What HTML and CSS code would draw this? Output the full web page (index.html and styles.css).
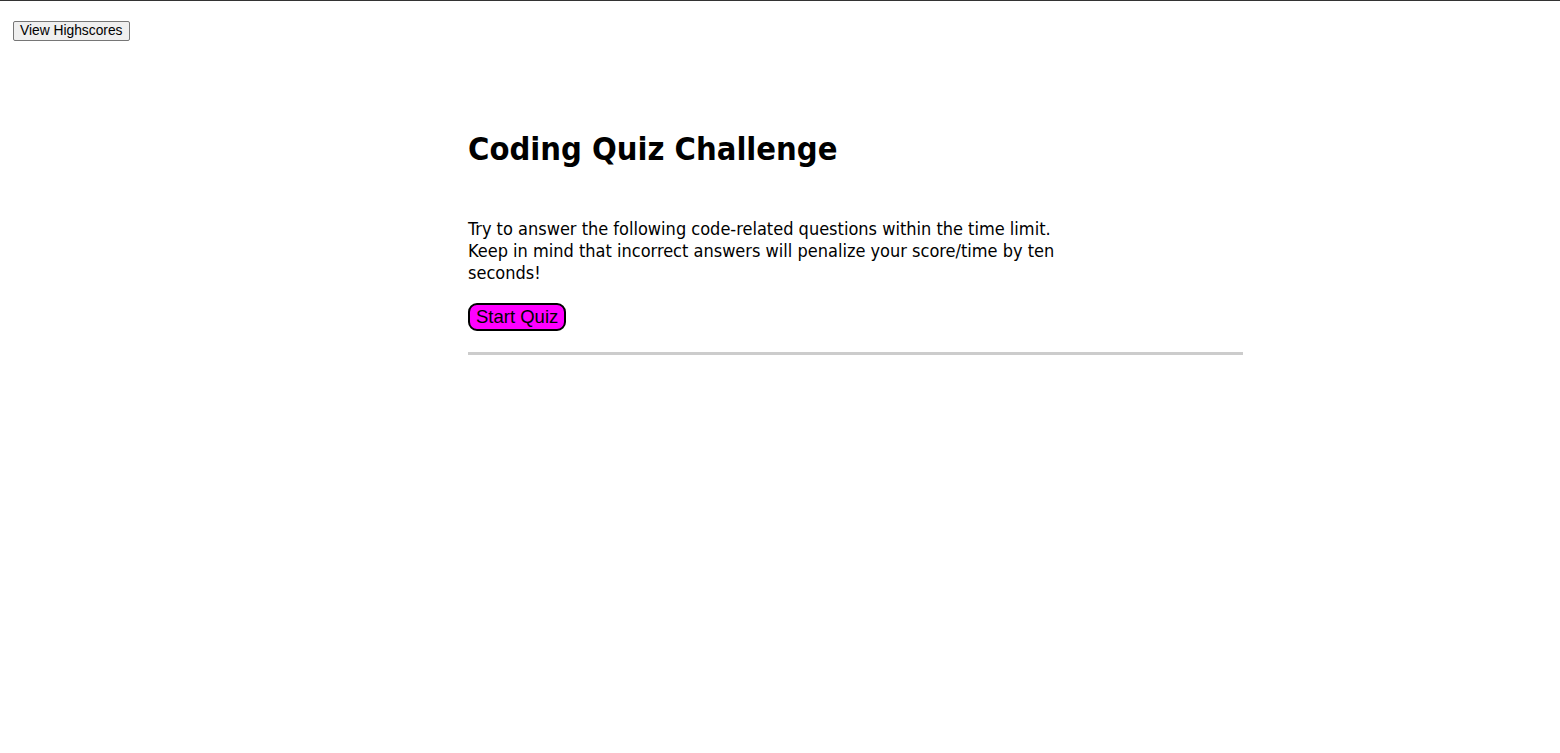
FILE: index.html
```html
<!DOCTYPE html>
<html lang="en">
<head>
<meta charset="utf-8">
<title>Coding Quiz Challenge</title>
<link rel="stylesheet" href="styles.css">
</head>
<body>
<header class="top">
  <button class="scores-btn" type="button">View Highscores</button>
</header>
<main class="quiz">
  <h1 class="title">Coding Quiz Challenge</h1>
  <p class="intro">Try to answer the following code-related questions within the time limit. Keep in mind that incorrect answers will penalize your score/time by ten seconds!</p>
  <button class="start-btn" type="button">Start Quiz</button>
  <hr class="divider">
</main>
</body>
</html>
```
FILE: styles.css
```css
html, body {
  margin: 0;
  padding: 0;
  background: #ffffff;
}
body {
  border-top: 1px solid #333333;
  font-family: "DejaVu Sans Condensed", "DejaVu Sans", sans-serif;
  font-stretch: condensed;
  color: #000;
}
.top {
  display: flex;
  padding: 20px 13px 0;
}
.scores-btn {
  font-family: "Liberation Sans", Arial, sans-serif;
  font-size: 13.8px;
  height: 20px;
  line-height: 18px;
  padding: 0 6px;
  background: #efefef;
  border: 1px solid #767676;
  border-radius: 2px;
  color: #000;
}
.quiz {
  margin-left: 30%;
  width: 775px;
  padding-top: 89px;
}
.title {
  font-size: 32.4px;
  font-weight: bold;
  margin: 0 0 49px;
  line-height: 39px;
}
.intro {
  font-size: 18px;
  line-height: 22px;
  max-width: 600px;
  margin: 0 0 19px;
}
.start-btn {
  font-family: "Liberation Sans", Arial, sans-serif;
  font-size: 18.5px;
  background: #ff00ff;
  color: #000;
  border: 2px solid #000;
  border-radius: 9px;
  padding: 2px 6px;
  height: 28px;
  line-height: 20px;
}
.divider {
  margin: 21px 0 0;
  border: 0;
  border-top: 3px solid #cccccc;
  height: 0;
}
```
